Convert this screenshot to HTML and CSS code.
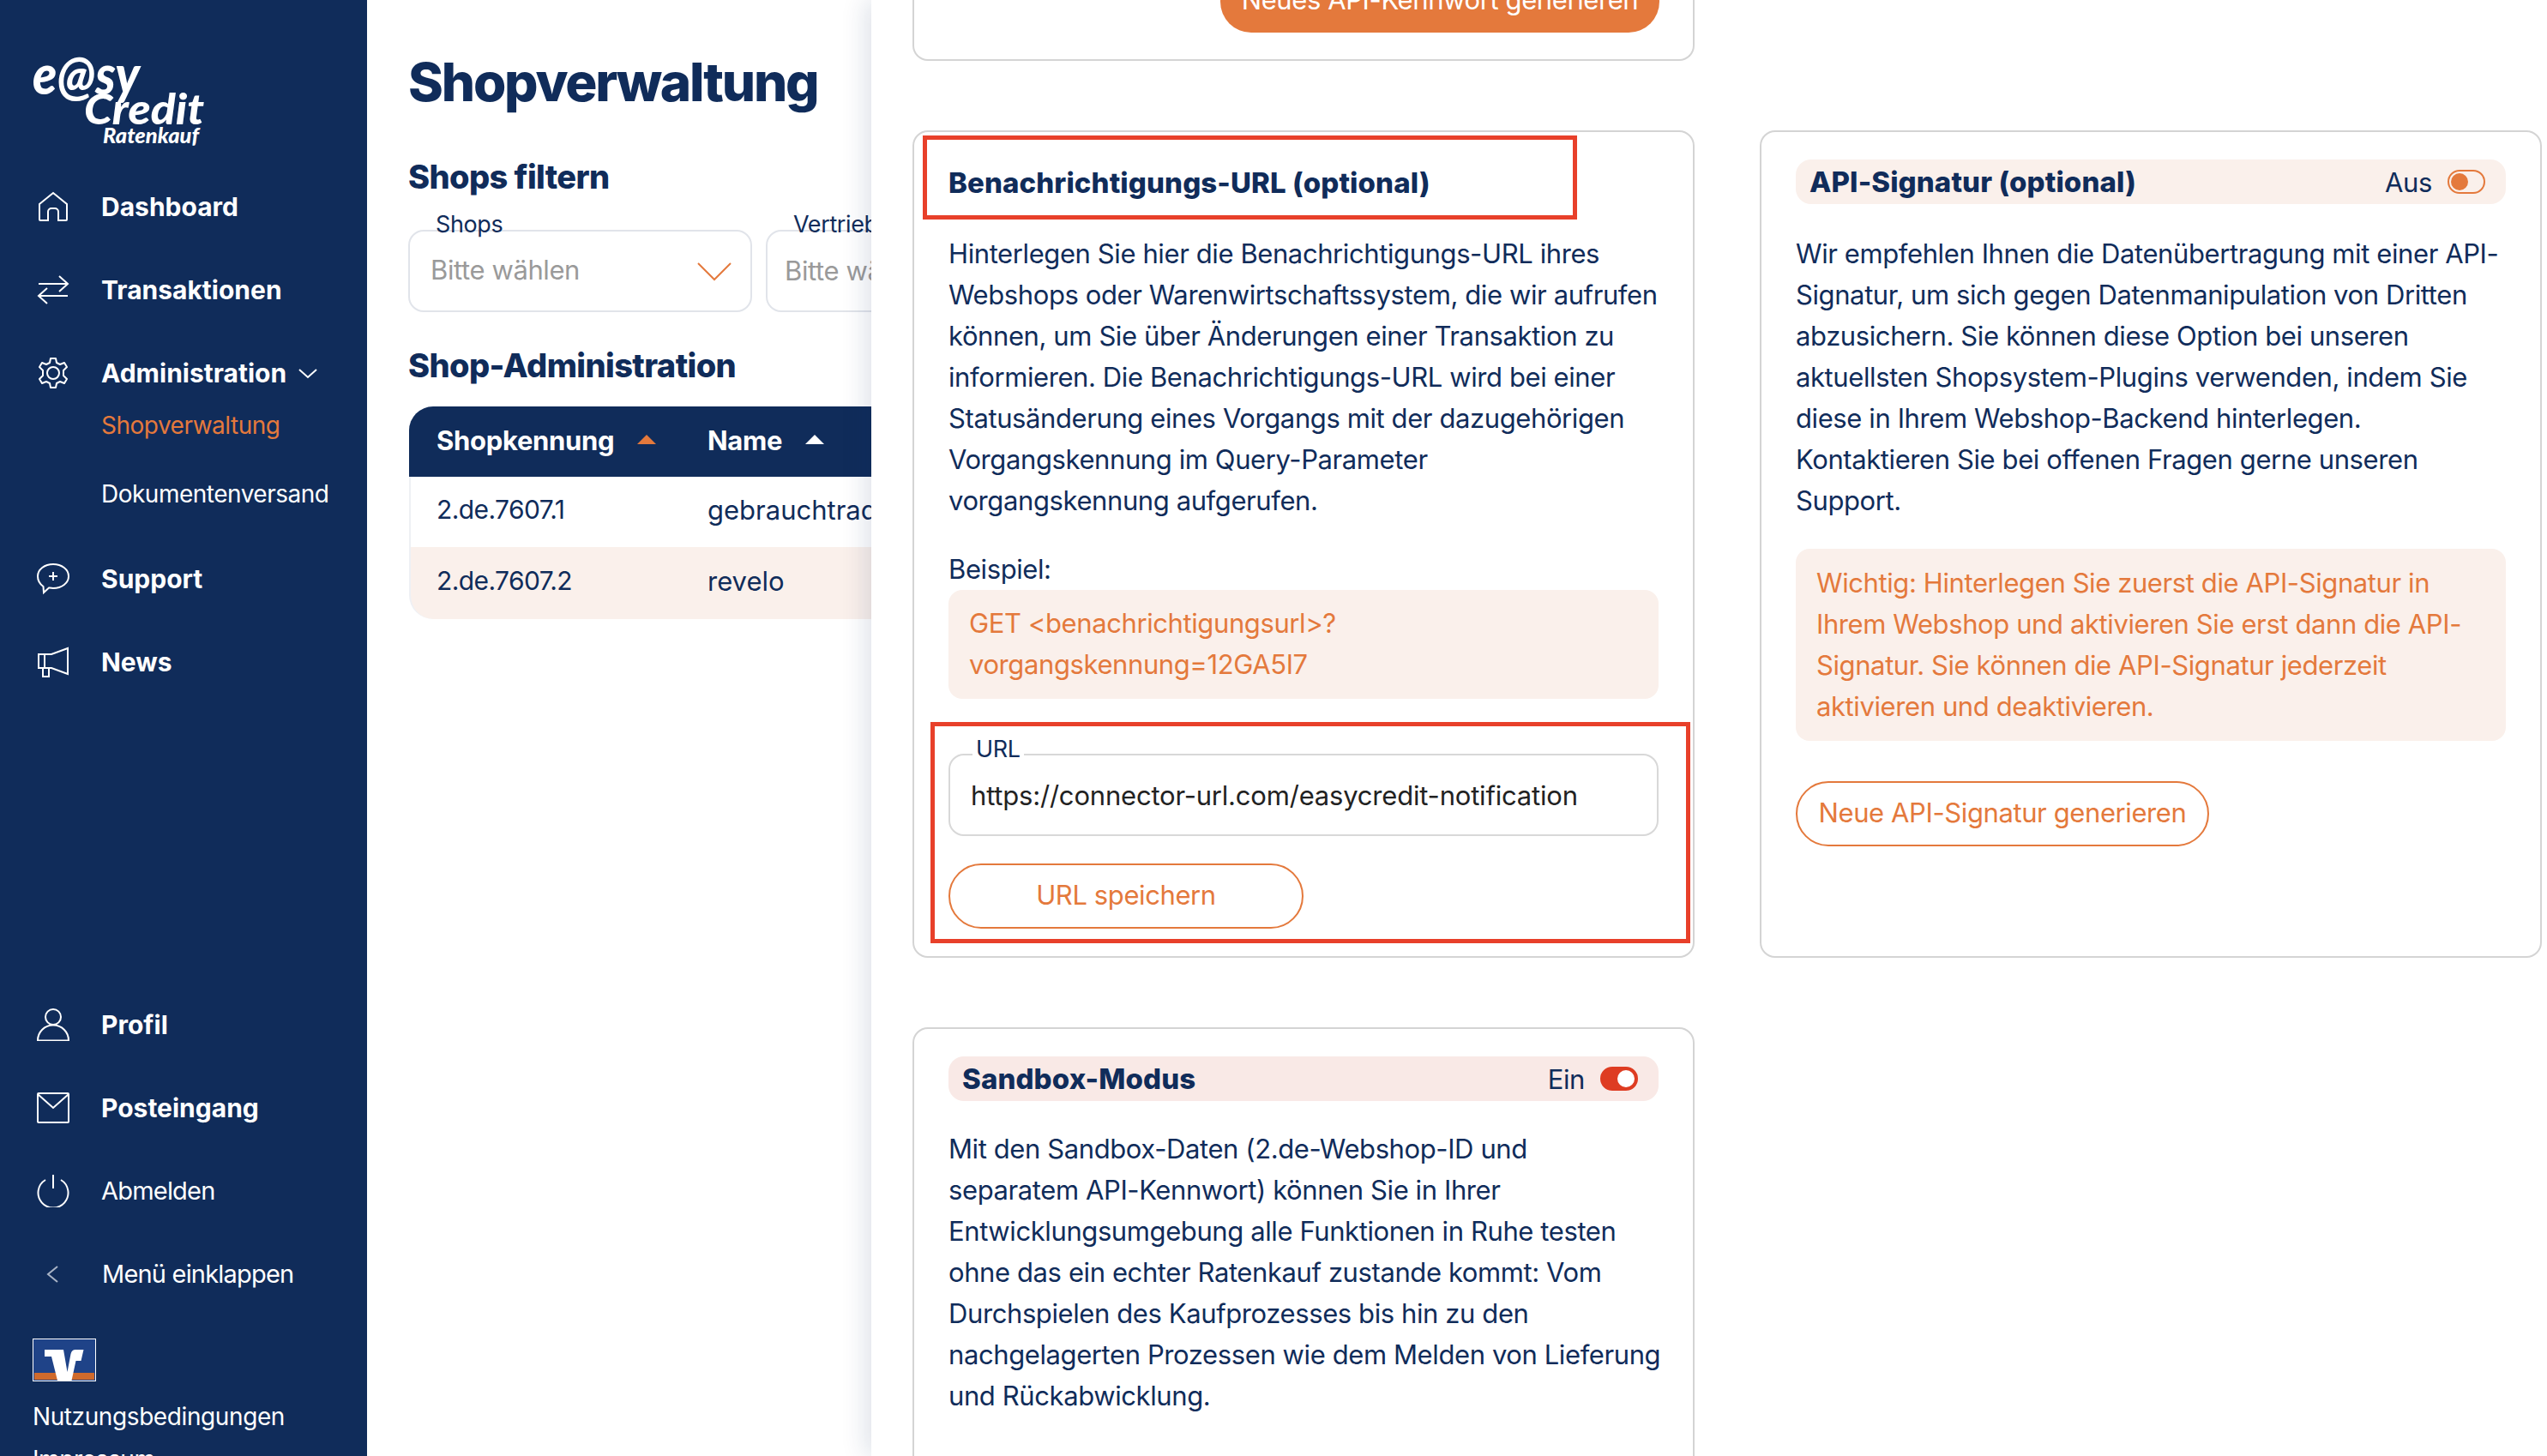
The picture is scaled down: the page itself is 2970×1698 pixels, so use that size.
FILE: index.html
```html
<!DOCTYPE html>
<html lang="de">
<head>
  <meta charset="UTF-8">
  <title>Shopverwaltung</title>
  <link rel="stylesheet" href="styles.css">
</head>
<body>
  <div class="app">
    <!-- Navigation -->
    <aside class="sidebar">
      <svg class="logo" width="210" height="112" viewBox="0 0 210 112">
        <text x="0" y="50" class="logo-easy" textLength="125" lengthAdjust="spacingAndGlyphs">e@sy</text>
        <text x="60" y="85" class="logo-credit" textLength="140" lengthAdjust="spacingAndGlyphs">Credit</text>
        <text x="82" y="107" class="logo-sub" textLength="112" lengthAdjust="spacingAndGlyphs">Ratenkauf</text>
      </svg>

      <nav class="nav-top">
        <a class="nav-item strong">
          <svg class="nav-icon" viewBox="0 0 38 38"><path d="M3 16 19 3l16 13v18a1 1 0 0 1-1 1h-9V25a4 4 0 0 0-4-4h-4a4 4 0 0 0-4 4v10H4a1 1 0 0 1-1-1z"/></svg>
          Dashboard
        </a>
        <a class="nav-item strong">
          <svg class="nav-icon" viewBox="0 0 38 38"><path d="M2 12h34M26 3l10 9-10 9M36 26H2M12 17 2 26l10 9"/></svg>
          Transaktionen
        </a>
        <a class="nav-item strong">
          <svg class="nav-icon" viewBox="0 0 38 38"><circle cx="19" cy="19" r="7"/><path d="M16 2h6l1 5 4 2 5-2 3 5-4 4v6l4 4-3 5-5-2-4 2-1 5h-6l-1-5-4-2-5 2-3-5 4-4v-6l-4-4 3-5 5 2 4-2z" stroke-linejoin="round"/></svg>
          Administration
          <svg class="nav-caret" viewBox="0 0 22 12"><path d="m1 1 10 9 10-9"/></svg>
        </a>
        <a class="nav-sub active">Shopverwaltung</a>
        <a class="nav-sub last">Dokumentenversand</a>
        <a class="nav-item strong">
          <svg class="nav-icon" viewBox="0 0 38 38"><path d="M19 2c10 0 18 6 18 14s-8 14-18 14c-2 0-3-.2-5-.5L8 35l-.5-7C4 25.500 1 21 1 16 1 8 9 2 19 2zM19 11v10M14 16h10"/></svg>
          Support
        </a>
        <a class="nav-item strong">
          <svg class="nav-icon" viewBox="0 0 38 38"><path d="M2 10h15L36 3v30l-19-7H2zM9 10v16M7 26v10h7V26"/></svg>
          News
        </a>
      </nav>

      <nav class="nav-bottom">
        <a class="nav-item strong">
          <svg class="nav-icon" viewBox="0 0 38 38"><circle cx="19" cy="10" r="9"/><path d="M1 37.500c0-10 8-18 18-18s18 8 18 18z"/></svg>
          Profil
        </a>
        <a class="nav-item strong">
          <svg class="nav-icon" viewBox="0 0 38 38"><rect x="1" y="2" width="36" height="34" rx="1"/><path d="m1 3 18 16L37 3"/></svg>
          Posteingang
        </a>
        <a class="nav-item">
          <svg class="nav-icon" viewBox="0 0 38 38"><path d="M10 6A17.500 17.500 0 1 0 28 6M19 0v16"/></svg>
          Abmelden
        </a>
        <a class="nav-item collapse">
          <svg class="nav-icon back" viewBox="0 0 38 38"><path d="m24 10-11 9 11 9"/></svg>
          Menü einklappen
        </a>
      </nav>

      <svg class="bank-logo" width="74" height="50" viewBox="0 0 74 50">
        <rect x=".5" y=".5" width="73" height="49" fill="#1f4388" stroke="#fff"/>
        <rect x="2" y="40" width="70" height="8" fill="#cf6a2c"/>
        <path fill="#fff" d="M14 13h22l4.500 26 4-21c1-4 3-5 6-5h9l-3 13h-6l-5 23H29l-7-28h-8z"/>
      </svg>
      <a class="foot-link first">Nutzungsbedingungen</a>
      <a class="foot-link">Impressum</a>
    </aside>

    <!-- Seiteninhalt -->
    <main class="content">
      <h1>Shopverwaltung</h1>
      <h2 class="filter-title">Shops filtern</h2>
      <div class="filters">
        <div class="select">
          <span class="select-label">Shops</span>
          <span class="select-value">Bitte wählen</span>
          <svg class="select-arrow" viewBox="0 0 40 24"><path d="m1 2 19 19L39 2"/></svg>
        </div>
        <div class="select">
          <span class="select-label">Vertriebskanal</span>
          <span class="select-value">Bitte wählen</span>
        </div>
      </div>
      <h2 class="table-title">Shop-Administration</h2>
      <table class="shops">
        <thead>
          <tr>
            <th class="col-id">Shopkennung <span class="sort active"></span></th>
            <th>Name <span class="sort"></span></th>
          </tr>
        </thead>
        <tbody>
          <tr><td>2.de.7607.1</td><td>gebrauchtrad-shop</td></tr>
          <tr class="alt"><td>2.de.7607.2</td><td>revelo</td></tr>
        </tbody>
      </table>
    </main>

    <!-- Seitenleiste Details -->
    <section class="drawer">
      <div class="card card-cut">
        <button class="btn-solid">Neues API-Kennwort generieren</button>
      </div>
      <div class="spacer"></div>

      <div class="card card-url">
        <h3 class="card-title">Benachrichtigungs-URL (optional)</h3>
        <p>Hinterlegen Sie hier die Benachrichtigungs-URL ihres<br>Webshops oder Warenwirtschaftssystem, die wir aufrufen<br>können, um Sie über Änderungen einer Transaktion zu<br>informieren. Die Benachrichtigungs-URL wird bei einer<br>Statusänderung eines Vorgangs mit der dazugehörigen<br>Vorgangskennung im Query-Parameter<br>vorgangskennung aufgerufen.</p>
        <p class="example-label">Beispiel:</p>
        <div class="note">GET &lt;benachrichtigungsurl&gt;?<br>vorgangskennung=12GA5I7</div>
        <div class="field">
          <span class="field-label">URL</span>
          <span class="field-value">https://connector-url.com/easycredit-notification</span>
        </div>
        <button class="btn-outline btn-save">URL speichern</button>
        <div class="mark mark-title"></div>
        <div class="mark mark-form"></div>
      </div>

      <div class="card card-sign">
        <div class="title-bar">
          <h3>API-Signatur (optional)</h3>
          <span class="switch-text">Aus</span>
          <span class="switch"></span>
        </div>
        <p>Wir empfehlen Ihnen die Datenübertragung mit einer API-<br>Signatur, um sich gegen Datenmanipulation von Dritten<br>abzusichern. Sie können diese Option bei unseren<br>aktuellsten Shopsystem-Plugins verwenden, indem Sie<br>diese in Ihrem Webshop-Backend hinterlegen.<br>Kontaktieren Sie bei offenen Fragen gerne unseren<br>Support.</p>
        <div class="note warning">Wichtig: Hinterlegen Sie zuerst die API-Signatur in<br>Ihrem Webshop und aktivieren Sie erst dann die API-<br>Signatur. Sie können die API-Signatur jederzeit<br>aktivieren und deaktivieren.</div>
        <button class="btn-outline btn-sign">Neue API-Signatur generieren</button>
      </div>

      <div class="card card-sandbox">
        <div class="title-bar red">
          <h3>Sandbox-Modus</h3>
          <span class="switch-text">Ein</span>
          <span class="switch on"></span>
        </div>
        <p>Mit den Sandbox-Daten (2.de-Webshop-ID und<br>separatem API-Kennwort) können Sie in Ihrer<br>Entwicklungsumgebung alle Funktionen in Ruhe testen<br>ohne das ein echter Ratenkauf zustande kommt: Vom<br>Durchspielen des Kaufprozesses bis hin zu den<br>nachgelagerten Prozessen wie dem Melden von Lieferung<br>und Rückabwicklung.</p>
      </div>
    </section>
  </div>
</body>
</html>
```

FILE: styles.css
```css
* {
  box-sizing: border-box;
}
html, body {
  margin: 0;
  height: 100%;
  overflow: hidden;
}
body {
  font-family: Inter, "Noto Sans", sans-serif;
  font-size: 31px;
  letter-spacing: -.4px;
  color: #102c5a;
  background: #fff;
}
.app {
  display: flex;
  height: 1698px;
  position: relative;
  overflow: hidden;
}

/* Navigation */
.sidebar {
  width: 428px;
  flex: none;
  height: 1698px;
  overflow: hidden;
  background: #102c5a;
  color: #fff;
  padding: 60px 0 0 38px;
  display: flex;
  flex-direction: column;
}
.sidebar > * {
  flex: none;
}
.logo {
  display: block;
  margin-bottom: 20px;
}
.logo text {
  fill: #fff;
  font-family: Lato, "Liberation Sans", sans-serif;
  font-weight: 900;
  font-style: italic;
  letter-spacing: 0;
}
.logo-easy { font-size: 62px; }
.logo-credit { font-size: 50px; }
.logo-sub { font-size: 24px; }
.nav-top {
  display: flex;
  flex-direction: column;
}
.nav-item {
  display: flex;
  align-items: center;
  height: 97px;
  font-size: 29px;
  letter-spacing: -.8px;
}
.nav-item.strong {
  font-weight: 700;
  font-size: 30px;
  letter-spacing: 0;
}
.nav-icon {
  width: 38px;
  height: 38px;
  margin: 0 37px 0 5px;
  fill: none;
  stroke: #fff;
  stroke-width: 2;
  flex: none;
}
.nav-icon.back {
  stroke: #a9b4c6;
  margin-right: 38px;
}
.nav-caret {
  width: 22px;
  height: 12px;
  margin: 2px 0 0 14px;
  fill: none;
  stroke: #fff;
  stroke-width: 2;
}
.nav-sub {
  display: block;
  margin-left: 80px;
  font-size: 28px;
  letter-spacing: -.5px;
  height: 80px;
  line-height: 40px;
}
.nav-sub.active {
  color: #e4793c;
  margin-top: -7px;
}
.nav-sub.last {
  height: 70px;
}
.nav-bottom {
  margin-top: 326px;
}
.bank-logo {
  display: block;
  margin-top: 27px;
}
.foot-link {
  display: block;
  font-size: 28px;
  letter-spacing: -.4px;
  line-height: 40px;
  margin-top: 10px;
}
.foot-link.first {
  margin-top: 21px;
}

/* Seiteninhalt */
.content {
  flex: 1;
  padding: 60px 0 0 48px;
  min-width: 0;
}
h1 {
  margin: 0;
  font-size: 62px;
  line-height: 72px;
  font-weight: 800;
  letter-spacing: -2.2px;
}
h2 {
  margin: 0;
  font-size: 38px;
  line-height: 46px;
  font-weight: 800;
  letter-spacing: -.6px;
}
.filter-title {
  margin-top: 51px;
}
.filters {
  display: flex;
  gap: 16px;
  margin-top: 39px;
}
.select {
  position: relative;
  flex: none;
  width: 401px;
  height: 96px;
  border: 2px solid #e1e4ea;
  border-radius: 18px;
  padding: 0 0 4px 24px;
  display: flex;
  align-items: center;
  color: #9a9a9a;
}
.select + .select {
  padding: 0 0 2px 20px;
}
.select-label {
  position: absolute;
  top: -27px;
  left: 28px;
  padding: 0 2px;
  color: #102c5a;
  font-size: 27px;
  line-height: 38px;
  letter-spacing: -.4px;
}
.select-arrow {
  position: absolute;
  right: 22px;
  top: 35px;
  width: 40px;
  height: 24px;
  fill: none;
  stroke: #e4793c;
  stroke-width: 2;
}
.table-title {
  margin-top: 39px;
}
.shops {
  margin: 25px 0 0 1px;
  width: 1000px;
  border-collapse: separate;
  border-spacing: 0;
}
.shops th {
  height: 82px;
  padding: 0 0 4px 32px;
  text-align: left;
  background: #102c5a;
  color: #fff;
  font-weight: 700;
  letter-spacing: -.3px;
}
.shops th:first-child {
  border-top-left-radius: 28px;
}
.col-id {
  width: 316px;
}
.shops td {
  height: 82px;
  padding: 0 0 6px 32px;
  letter-spacing: 0;
}
.shops td:first-child {
  border-left: 2px solid #eef0f4;
  font-size: 30px;
  letter-spacing: -.6px;
  padding-left: 30px;
}
.shops .alt td {
  background: #faf0eb;
  height: 84px;
}
.shops .alt td:first-child {
  border-bottom-left-radius: 28px;
}
.sort {
  display: inline-block;
  margin: 0 0 8px 20px;
  vertical-align: middle;
  border-left: 11px solid transparent;
  border-right: 11px solid transparent;
  border-bottom: 11px solid #fff;
}
.sort.active {
  border-bottom-color: #e4793c;
}

/* Seitenleiste Details */
.drawer {
  position: absolute;
  left: 1016px;
  top: 0;
  width: 1954px;
  height: 1698px;
  background: #fff;
  box-shadow: -6px 0 28px rgba(16, 44, 90, .14);
  padding-left: 48px;
  display: grid;
  grid-template-columns: 912px 912px;
  column-gap: 76px;
  row-gap: 81px;
  grid-template-rows: 71px 965px 600px;
  align-content: start;
}
.card {
  position: relative;
  border: 2px solid #d4d4d4;
  border-radius: 18px;
  padding: 32px 40px 0;
}
.card p {
  margin: 0;
  line-height: 48px;
  white-space: nowrap;
}
.card-cut {
  border-top: none;
  border-radius: 0 0 18px 18px;
  padding: 0;
  overflow: hidden;
}
.btn-solid {
  display: block;
  margin: -34px 0 0 357px;
  width: 512px;
  height: 72px;
  padding-bottom: 6px;
  border: none;
  border-radius: 36px;
  background: #e4793c;
  color: #fff;
  font: inherit;
  letter-spacing: -.4px;
}
.card-title {
  margin: 0;
  height: 54px;
  line-height: 54px;
  font-size: 33px;
  font-weight: 800;
  letter-spacing: .1px;
}
.title-bar {
  display: flex;
  align-items: center;
  height: 52px;
  padding: 0 24px 0 16px;
  background: #faf0eb;
  border-radius: 18px;
}
.title-bar.red {
  background: #f9e9e6;
}
.title-bar h3 {
  margin: 0 auto 0 0;
  font-size: 33px;
  font-weight: 800;
  letter-spacing: .1px;
}
.title-bar + p {
  margin-top: 34px;
}
.card-sandbox .title-bar + p {
  margin-top: 32px;
}
.card-title + p {
  margin-top: 32px;
}
.switch-text {
  margin-right: 18px;
}
.switch {
  position: relative;
  width: 44px;
  height: 28px;
  border: 2px solid #e4793c;
  border-radius: 14px;
}
.switch::after {
  content: "";
  position: absolute;
  left: 2px;
  top: 2px;
  width: 20px;
  height: 20px;
  border-radius: 50%;
  background: #e4793c;
}
.switch.on {
  background: #de3c22;
  border-color: #de3c22;
}
.switch.on::after {
  left: auto;
  right: 2px;
  background: #fff;
}
.card .example-label {
  margin-top: 32px;
}
.note {
  background: #faf0eb;
  color: #e4793c;
  border-radius: 16px;
  padding: 15px 24px 16px;
  line-height: 48px;
}
.note.warning {
  margin-top: 32px;
  padding: 16px 24px;
}
.field {
  position: relative;
  margin-top: 64px;
  height: 96px;
  border: 2px solid #d8d8d8;
  border-radius: 18px;
  padding-left: 24px;
  display: flex;
  align-items: center;
  color: #222;
}
.field-value {
  letter-spacing: -.2px;
}
.field-label {
  position: absolute;
  top: -24px;
  left: 26px;
  padding: 0 4px;
  background: #fff;
  color: #102c5a;
  font-size: 27px;
  line-height: 34px;
  letter-spacing: -.4px;
}
.btn-outline {
  display: block;
  height: 76px;
  padding: 0 24px 4px;
  border: 2px solid #e4793c;
  border-radius: 38px;
  background: #fff;
  color: #e4793c;
  font: inherit;
  letter-spacing: -.4px;
}
.btn-save {
  width: 414px;
  margin-top: 32px;
}
.btn-sign {
  margin-top: 47px;
  width: 482px;
}

/* rote Markierungen */
.mark {
  position: absolute;
  border: 5px solid #e8402a;
}
.mark-title {
  left: 10px;
  top: 4px;
  width: 763px;
  height: 98px;
}
.mark-form {
  left: 19px;
  top: 688px;
  width: 886px;
  height: 258px;
}
```
